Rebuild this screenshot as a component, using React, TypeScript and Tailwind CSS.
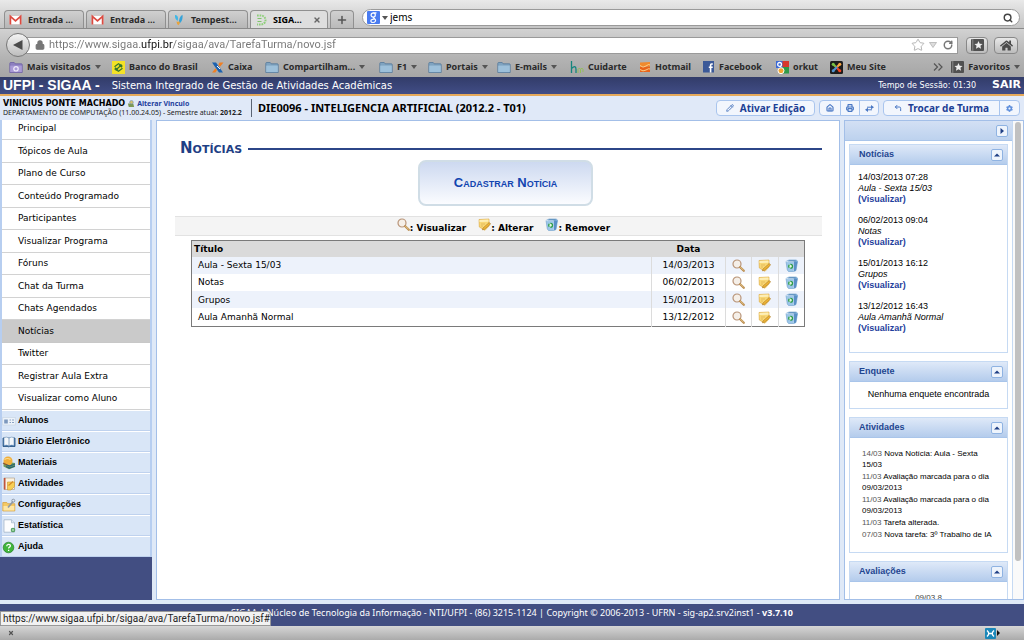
import React from "react";
import type { ReactNode } from "react";
import { Home, Lock, Plus, Printer, RotateCw, Search, Star, X, CornerUpLeft, Pencil } from "lucide-react";
import { FaCog, FaHome } from "react-icons/fa";

const UI = "font-['Noto_Sans','Open_Sans',sans-serif]";
const VERDANA = "font-['DejaVu_Sans','Verdana',sans-serif]";
const ARIAL = "font-['Liberation_Sans','Arial',sans-serif]";
const ROBOTO = "font-['Roboto',sans-serif]";

/* ---------- icons ---------- */

const Gmail = () => (
  <svg viewBox="0 0 13 12" className="h-3 w-[13px] shrink-0">
    <rect x=".5" y="1.5" width="12" height="9" rx="1" fill="#fff" stroke="#c9b5b3" strokeWidth=".6" />
    <path d="M1.4 10.6V2.4l5.1 4.4 5.1-4.4v8.2" fill="none" stroke="#dc4a40" strokeWidth="1.7" />
  </svg>
);

const Tempest = () => (
  <svg viewBox="0 0 12 12" className="h-3 w-3 shrink-0">
    <path d="M2 1c2 0 3 1.500 3 3.500L4.800 7C3 6 1.500 4 2 1z" fill="#3fb7e6" />
    <path d="M9.500.8C7 2 5.800 5.500 5.800 9.500 8.500 9 10 5 9.500.8z" fill="#35a3d9" />
    <path d="M3.500 7.500q2 .5 3.500 0-.2 3-1.700 3.800Q3.700 10 3.500 7.500z" fill="#e9a23b" />
  </svg>
);

const SigaaTab = () => (
  <svg viewBox="0 0 12 12" className="h-3 w-3 shrink-0">
    <path d="M2 1.500h4a4.500 4.500 0 0 1 0 9H2" fill="none" stroke="#8fcf7b" strokeWidth="2" strokeDasharray="1.700 .9" />
    <path d="M2.500 4.500h4M2.500 7.500h4" stroke="#7fc46b" strokeWidth="1.200" />
  </svg>
);

const GoogleG = () => (
  <svg viewBox="0 0 13 13" className="h-[13px] w-[13px] shrink-0">
    <rect width="13" height="13" rx="1" fill="#4a7cf0" />
    <path d="M9.500 1.800H6.600c-3.300 0-3.300 4.300-.4 4.300 2.800 0 2.800-4 .2-4.200M7 6.200c-1 1 .2 1.200.9 1.800 1.600 1.300.3 3.500-2 3.500s-3-2.600-.6-3.200c.8-.2 1.700-.2 2.200-.1" fill="none" stroke="#fff" strokeWidth="1.200" />
  </svg>
);

const Folder = ({ smart = false }: { smart?: boolean }) => (
  <svg viewBox="0 0 14 13" className="h-[13px] w-3.5 shrink-0">
    <path d="M.8 11.500V2.300q0-.8.8-.8h3.600l1 1.300h6.200q.8 0 .8.8v7.900z" fill={smart ? "#8d7fc0" : "#7fa3c0"} stroke={smart ? "#6c5fa3" : "#56799a"} strokeWidth=".8" />
    <path d="M1.200 4.600h11.600v6.500H1.200z" fill={smart ? "#a99ad6" : "#9dc0da"} />
    {smart && <circle cx="7" cy="7.800" r="2.200" fill="none" stroke="#f0ecfb" strokeWidth="1.200" />}
  </svg>
);

const BancoBrasil = () => (
  <svg viewBox="0 0 13 13" className="h-[13px] w-[13px] shrink-0">
    <rect width="13" height="13" fill="#f4e227" />
    <path d="M2.500 5.800l4-3 4 2.500M10.500 7.200l-4 3-4-2.500M3.500 9.200l6.200-5.400M7 4.600l3 1.700M6 8.400L3 6.700" fill="none" stroke="#33762f" strokeWidth="1.200" />
  </svg>
);

const Caixa = () => (
  <svg viewBox="0 0 13 13" className="h-[13px] w-[13px] shrink-0">
    <path d="M1 1.500h4L12 11.500H8z" fill="#1c62b0" />
    <path d="M8.500 1.500h4L9 5.700 7.300 4zM1 11.500l3.500-4.300L6 9l-1.600 2.500z" fill="#f07f22" />
    <path d="M6 5l3 3" stroke="#fff" strokeWidth="1" />
  </svg>
);

const Cuidarte = () => (
  <svg viewBox="0 0 14 14" className="h-3.5 w-3.5 shrink-0">
    <path d="M1.500 1v12M1.500 8.500q4.500-4 4.500 1V13" fill="none" stroke="#15857e" strokeWidth="1.300" />
    <path d="M8 13V9.500q1.500-3 2.500 0V13M10.500 9.500q1.500-3 2.500 0V12" fill="none" stroke="#93bf5a" strokeWidth="1" />
  </svg>
);

const Hotmail = () => (
  <svg viewBox="0 0 12 12" className="h-3 w-3 shrink-0">
    <path d="M1 1.500l10-.5v4.500H1z" fill="#f08a2d" />
    <path d="M1 5.500h10V11H1z" fill="#e8641b" />
    <path d="M1 4.500q3 3 6 .5t4-1M1 8.500q3 2.500 6 .5t4-1" fill="none" stroke="#ffd890" strokeWidth=".9" />
  </svg>
);

const FacebookLogo = () => (
  <svg viewBox="0 0 12 12" className="h-3 w-3 shrink-0">
    <rect width="11" height="11.500" fill="#3b5998" />
    <path d="M9.800 3H8.600q-1 0-1 1.200v7.300M5.800 6.300h3.900" fill="none" stroke="#fff" strokeWidth="1.600" />
  </svg>
);

const Orkut = () => (
  <svg viewBox="0 0 13 13" className="h-[13px] w-[13px] shrink-0">
    <rect x="5" width="8" height="6" fill="#d8372d" />
    <rect x="6" y="6" width="7" height="6.500" fill="#2f9a48" />
    <rect width="6.500" height="7" fill="#3b69d6" />
    <circle cx="3.600" cy="3.400" r="1.900" fill="none" stroke="#fff" strokeWidth="1.300" />
    <circle cx="5" cy="9.700" r="3" fill="#f2a531" stroke="#fff" strokeWidth="1" />
  </svg>
);

const Joomla = () => (
  <svg viewBox="0 0 13 13" className="h-[13px] w-[13px] shrink-0">
    <rect width="13" height="13" rx="1.500" fill="#1d1d1d" />
    <g fill="none" strokeWidth="2.200" strokeLinecap="round">
      <path d="M3.500 3.500l3 3" stroke="#7ac143" />
      <path d="M9.500 3.500l-3 3" stroke="#f9a541" />
      <path d="M9.500 9.500l-3-3" stroke="#f44321" />
      <path d="M3.500 9.500l3-3" stroke="#5091cd" />
    </g>
    <circle cx="3.200" cy="3.200" r="1.500" fill="#7ac143" />
    <circle cx="9.800" cy="3.200" r="1.500" fill="#f9a541" />
    <circle cx="9.800" cy="9.800" r="1.500" fill="#f44321" />
    <circle cx="3.200" cy="9.800" r="1.500" fill="#5091cd" />
  </svg>
);

const StarBook = () => (
  <svg viewBox="0 0 13 12" className="h-3 w-[13px] shrink-0">
    <rect width="13" height="12" rx="1" fill="#515151" />
    <path d="M1.800 0v12" stroke="#999" strokeWidth=".8" />
    <path d="M7.500 2l1.200 2.700 2.900.2-2.200 1.900.7 2.900-2.600-1.500-2.600 1.500.7-2.900L3.400 4.900l2.900-.2z" fill="#eee" />
  </svg>
);

const Caret = () => (
  <svg viewBox="0 0 6 4" className="h-1 w-1.5 shrink-0">
    <path d="M0 0h6L3 4z" fill="#555" />
  </svg>
);

const Magnifier = () => (
  <svg viewBox="0 0 13 13" className="inline-block h-[13px] w-[13px]">
    <circle cx="5" cy="5" r="4" fill="#f5efe8" stroke="#b89478" strokeWidth="1.200" />
    <path d="M8.200 8.200l3.600 3.600" stroke="#b98a4c" strokeWidth="2.200" strokeLinecap="round" />
    <path d="M8.600 8.300l2.900 2.900" stroke="#f0d69a" strokeWidth=".8" strokeLinecap="round" />
  </svg>
);

const Note = () => (
  <svg viewBox="0 0 13 13" className="inline-block h-[13px] w-[13px]">
    <path d="M1 1.500l10-.5v7L7 12.300 1.300 9z" fill="#f8d775" stroke="#dba63c" strokeWidth=".6" />
    <path d="M1.500 2l9-.5v2.200l-9 .4z" fill="#fdeeb6" />
    <path d="M5 10l6.300-5.500 1.300 1.500-6.400 5.500-1.900.3z" fill="#f2b632" stroke="#a8782c" strokeWidth=".6" />
    <path d="M3 6h4M3 8h2" stroke="#d9a94a" strokeWidth=".6" />
  </svg>
);

const Trash = () => (
  <svg viewBox="0 0 13 13" className="inline-block h-[13px] w-[13px]">
    <path d="M1 2.500l3-1.500h7.500l1 1.500-1.500 9-2 1H3.500L2.300 11z" fill="#9cc6e8" stroke="#6d9dcb" strokeWidth=".6" />
    <path d="M1.200 2.600h7.500L9 12.300" fill="none" stroke="#e2f0fb" strokeWidth=".8" />
    <path d="M2.500 2.300l2-.8h6l.8.8z" fill="#3f74a8" />
    <path d="M8.700 2.600l3.800-.2-1.600 9-2 .9z" fill="#5a90c6" />
    <circle cx="5.600" cy="7.200" r="1.900" fill="#e6f6e2" stroke="#2d9c45" strokeWidth="1.300" strokeDasharray="3 .9" />
  </svg>
);

const GroupIcon = ({ kind }: { kind: string }) => (
  <svg viewBox="0 0 14 14" className="h-3.5 w-3.5 shrink-0">
    {kind === "card" && (
      <>
        <rect x=".8" y="3.500" width="12.400" height="7.500" fill="#edf3fa" stroke="#c5d2e2" strokeWidth=".6" />
        <rect x="2.200" y="5.500" width="3.600" height="4" fill="#7d98bd" />
        <path d="M7.500 6h1.500M10 6h2M7.500 8.500h1.500M10 8.500h2" stroke="#8ba3c4" />
      </>
    )}
    {kind === "book" && (
      <>
        <path d="M1 3v8.500h5.300l.7.700.7-.7H13V3z" fill="#3d70a8" stroke="#24507f" strokeWidth=".8" />
        <path d="M2 2.500q3-1 5 .5 2-1.500 5-.5v8q-3-1-5 .5-2-1.500-5-.5z" fill="#f3f7fb" stroke="#6c8fb5" strokeWidth=".6" />
        <path d="M7 3v8" stroke="#6c8fb5" strokeWidth=".8" />
      </>
    )}
    {kind === "books" && (
      <>
        <path d="M1.500 8l5-2 6.500 1v4l-6 2.300-5.500-2.800z" fill="#6f9b5a" />
        <circle cx="6" cy="5" r="4.500" fill="#f0ae3a" />
        <path d="M2.500 3.500q3-2 6 0" fill="none" stroke="#fbd98c" strokeWidth="1.200" />
        <path d="M4 8.500l3.500 1.500L13 8M4 10.500l3.500 1.500 5.500-2" fill="none" stroke="#24627a" strokeWidth="1.200" />
        <path d="M1 7l4 2" stroke="#8a542c" strokeWidth="1.300" />
      </>
    )}
    {kind === "notes" && (
      <>
        <path d="M2 1h10.500v11.500H2z" fill="#fbf2df" stroke="#b5a38c" strokeWidth=".7" />
        <path d="M2.700 1v11.500" stroke="#c1543d" strokeWidth="1.600" />
        <path d="M5.500 5h7v4.500L9 13H5.500z" fill="#f7cf55" stroke="#c99430" strokeWidth=".6" />
        <path d="M6.500 8.500l4.500-4" stroke="#d7892a" strokeWidth="1.200" />
      </>
    )}
    {kind === "config" && (
      <>
        <path d="M.8 4.500h4l1 1.200h7v7.300H.8z" fill="#f5c963" stroke="#d29c3a" strokeWidth=".7" />
        <path d="M1.500 8h10.800v4.500H1.500z" fill="#fde6a6" />
        <path d="M6 9.500l5-6" stroke="#8f9aa8" strokeWidth="1.700" />
        <circle cx="11.300" cy="2.700" r="1.500" fill="none" stroke="#8f9aa8" />
      </>
    )}
    {kind === "page" && (
      <>
        <path d="M2 .8h7.500l3 3v9.400H2z" fill="#fcfdfe" stroke="#9badc2" strokeWidth=".7" />
        <path d="M9.500.8v3h3" fill="#dce6f0" stroke="#9badc2" strokeWidth=".6" />
        <circle cx="11" cy="11" r="2.300" fill="#4d9d5c" />
        <path d="M11 9.700v2.600M9.700 11h2.600" stroke="#d6f0d4" strokeWidth=".7" />
      </>
    )}
    {kind === "help" && (
      <>
        <circle cx="6.500" cy="7.500" r="5.300" fill="#3fb53b" stroke="#237a26" strokeWidth=".7" />
        <path d="M4.700 6.200q.1-1.900 1.900-1.900t1.800 1.500q0 1-1.200 1.500-.6.400-.6 1.200M6.600 9.800v1.200" fill="none" stroke="#fff" strokeWidth="1.300" />
      </>
    )}
  </svg>
);

/* ---------- browser chrome ---------- */

const tabs = [
  { icon: <Gmail />, label: "Entrada ..." },
  { icon: <Gmail />, label: "Entrada ..." },
  { icon: <Tempest />, label: "Tempest..." },
];

function TabBar() {
  return (
    <div className="flex h-[29px] items-end gap-0.5 border-b border-[#8a8a8a] bg-linear-to-b from-[#e9e9e9] to-[#c4c4c4] pl-1">
      {tabs.map((t, i) => (
        <button key={i} className="flex h-[18px] w-20 items-center gap-1.5 rounded-t border border-b-0 border-[#909090] bg-linear-to-b from-[#d0d0d0] to-[#b6b6b6] pl-1 text-[9px] font-bold whitespace-nowrap text-[#2c2c2c]">
          {t.icon}
          {t.label}
        </button>
      ))}
      <div className="flex h-[18px] w-[78px] items-center gap-1.5 rounded-t border border-b-0 border-[#909090] bg-[#dedede] pl-1 text-[9px]">
        <button className="flex grow items-center gap-1.5 font-bold whitespace-nowrap">
          <SigaaTab />
          SIGA...
        </button>
        <button aria-label="Fechar aba" className="pr-1.5">
          <X className="size-2 text-[#666]" strokeWidth={4} />
        </button>
      </div>
      <button aria-label="Nova aba" className="flex h-[18px] w-6 items-center justify-center rounded-t border border-b-0 border-[#909090] bg-linear-to-b from-[#d0d0d0] to-[#bababa]">
        <Plus className="size-3 text-[#555]" strokeWidth={3} />
      </button>
      <div className="mr-1 mb-0.5 ml-1.5 flex h-[17px] grow items-center gap-0.5 rounded-full border border-[#9a9a9a] bg-white pr-1.5 pl-1">
        <GoogleG />
        <Caret />
        <input aria-label="Pesquisar" defaultValue="jems" className="min-w-0 grow bg-transparent text-[10px] text-black outline-none" />
        <Search className="size-2.5 text-[#444]" strokeWidth={3.500} />
      </div>
    </div>
  );
}

function AddressBar() {
  return (
    <div className="flex h-7 items-center bg-linear-to-b from-[#d2d2d2] to-[#b4b4b4] px-1.5 pt-1">
      <button aria-label="Voltar" className="z-10 -my-1 flex size-6 shrink-0 items-center justify-center rounded-full border border-[#777] bg-linear-to-b from-[#f4f4f4] to-[#bdbdbd]">
        <svg viewBox="0 0 10 10" className="size-2.5">
          <path d="M9.500 0v10L0 5z" fill="#4a4a4a" />
        </svg>
      </button>
      <div className="-ml-1 flex h-[17px] grow items-center border border-[#9a9a9a] bg-white pr-1 pl-2">
        <Lock className="size-2.5 shrink-0 text-[#777]" fill="#777" strokeWidth={3} />
        <input
          aria-label="Endereço"
          defaultValue="https://www.sigaa.ufpi.br/sigaa/ava/TarefaTurma/novo.jsf"
          className={"ml-1 min-w-0 grow bg-[linear-gradient(90deg,#757575_91px,#111_91px,#111_124px,#757575_124px)] bg-clip-text text-[11px] text-transparent outline-none " + ROBOTO}
        />
        <Star className="size-3.5 text-[#aaa]" strokeWidth={1.500} />
        <svg viewBox="0 0 8 6" className="ml-1 h-1.5 w-2">
          <path d="M.5.5h7L4 5.500z" fill="#ddd" stroke="#aaa" strokeWidth=".7" />
        </svg>
        <RotateCw className="ml-1.5 size-2.5 text-[#777]" strokeWidth={3.500} />
      </div>
      <button aria-label="Favoritos" className="ml-2 flex h-[17px] w-[22px] items-center justify-center rounded-sm border border-[#888] bg-linear-to-b from-[#e8e8e8] to-[#bcbcbc]">
        <StarBook />
      </button>
      <button aria-label="Página inicial" className="ml-1.5 flex h-[17px] w-6 items-center justify-center rounded-sm border border-[#888] bg-linear-to-b from-[#e8e8e8] to-[#bcbcbc]">
        <FaHome className="size-[13px] text-[#4a4a4a]" />
      </button>
    </div>
  );
}

const bookmarks: { icon: ReactNode; label: string; menu?: boolean; width: string }[] = [
  { icon: <Folder smart />, label: "Mais visitados", menu: true, width: "w-[103px]" },
  { icon: <BancoBrasil />, label: "Banco do Brasil", width: "w-[99px]" },
  { icon: <Caixa />, label: "Caixa", width: "w-[54px]" },
  { icon: <Folder />, label: "Compartilham...", menu: true, width: "w-[114px]" },
  { icon: <Folder />, label: "F1", menu: true, width: "w-[49px]" },
  { icon: <Folder />, label: "Portais", menu: true, width: "w-[69px]" },
  { icon: <Folder />, label: "E-mails", menu: true, width: "w-[73px]" },
  { icon: <Cuidarte />, label: "Cuidarte", width: "w-[69px]" },
  { icon: <Hotmail />, label: "Hotmail", width: "w-[64px]" },
  { icon: <FacebookLogo />, label: "Facebook", width: "w-[73px]" },
  { icon: <Orkut />, label: "orkut", width: "w-[54px]" },
  { icon: <Joomla />, label: "Meu Site", width: "w-[60px]" },
];

function BookmarkBar() {
  return (
    <nav aria-label="Barra de favoritos" className="flex h-5 items-center bg-linear-to-b from-[#b4b4b4] to-[#a6a6a6] pr-1 pl-[9px] text-[9px] font-bold whitespace-nowrap text-[#2a2a2a]">
      {bookmarks.map((b) => (
        <a key={b.label} href="#" className={"flex shrink-0 items-center gap-1 " + b.width}>
          {b.icon}
          {b.label}
          {b.menu && <Caret />}
        </a>
      ))}
      <button aria-label="Mais favoritos" className="ml-auto">
        <svg viewBox="0 0 10 8" className="mr-2 h-2 w-2.5">
          <path d="M1 .5L4.500 4 1 7.500M5.500.5L9 4 5.500 7.500" fill="none" stroke="#555" strokeWidth="1.200" />
        </svg>
      </button>
      <a href="#" className="flex items-center gap-1">
        <StarBook />
        Favoritos
        <Caret />
      </a>
    </nav>
  );
}

/* ---------- SIGAA header ---------- */

const toolBtn = "flex items-center justify-center border-[#a9c5ee]";

function Header() {
  return (
    <header className={VERDANA}>
      <div className="flex h-[19px] items-center border-b-2 border-[#e5a95a] bg-linear-to-b from-[#323c69] to-[#414d86] px-[3px] whitespace-nowrap text-white">
        <span className={"text-[14px] font-bold " + ARIAL}>UFPI - SIGAA -</span>
        <span className="ml-3 text-[10px]">Sistema Integrado de Gestão de Atividades Acadêmicas</span>
        <span className="ml-auto text-[8px]">Tempo de Sessão: 01:30</span>
        <a href="#" className="ml-4 text-[11px] font-bold">SAIR</a>
      </div>
      <div className={"flex h-6 items-center bg-[#e0e9f8] pr-1 whitespace-nowrap " + UI}>
        <div className="flex h-[18px] w-[252px] shrink-0 flex-col justify-center border-r border-[#5a6474] pl-[3px]">
          <div className="flex items-center gap-0.5 text-[8px] leading-[9px] font-bold">
            <span className={VERDANA}>VINICIUS PONTE MACHADO</span>
            <a href="#" className="flex items-center text-[7px] text-[#1f3f9d]">
              <svg viewBox="0 0 9 9" className="mr-0.5 size-2">
                <path d="M1 4h6l1 4H2z" fill="#7d9a55" />
                <circle cx="5" cy="2.500" r="2" fill="#d6c36c" stroke="#6f8fb5" strokeWidth=".7" />
              </svg>
              Alterar Vinculo
            </a>
          </div>
          <p className="text-[7px] leading-[9px] text-[#222]">
            DEPARTAMENTO DE COMPUTAÇÃO (11.00.24.05) - Semestre atual: <b>2012.2</b>
          </p>
        </div>
        <h1 className="ml-1.5 text-[11px] font-bold">DIE0096 - INTELIGENCIA ARTIFICIAL (2012.2 - T01)</h1>
        <div className="ml-auto flex h-4 gap-1 text-[10px] font-bold text-[#1c3f95]">
          <button className={toolBtn + " w-[99px] gap-1.5 rounded border bg-[#f2f6fd]"}>
            <Pencil className="size-2 text-[#5b83c4]" strokeWidth={3} />
            Ativar Edição
          </button>
          <div className="flex w-[60px] rounded border border-[#a9c5ee] bg-[#f2f6fd]">
            <button aria-label="Início" className={toolBtn + " w-5"}><Home className="size-2 text-[#4a78c4]" strokeWidth={3.500} /></button>
            <button aria-label="Imprimir" className={toolBtn + " w-5 border-x"}><Printer className="size-2 text-[#4a78c4]" strokeWidth={3.500} /></button>
            <button aria-label="Trocar" className={toolBtn + " grow"}>
              <svg viewBox="0 0 9 7" className="h-[7px] w-[9px]">
                <path d="M2 2.200h5M2 4.800h5" stroke="#4a78c4" strokeWidth="1" />
                <path d="M6 0l3 2.200L6 4.200zM3 2.800L0 4.800 3 7z" fill="#4a78c4" />
              </svg>
            </button>
          </div>
          <div className="flex w-[137px] rounded border border-[#a9c5ee] bg-[#f2f6fd]">
            <button className={toolBtn + " grow gap-1.5"}>
              <CornerUpLeft className="size-2 text-[#4a78c4]" strokeWidth={3} />
              Trocar de Turma
            </button>
            <button aria-label="Configurações" className={toolBtn + " w-5 border-l"}><FaCog className="size-[7px] text-[#5f8fdc]" /></button>
          </div>
        </div>
      </div>
    </header>
  );
}

/* ---------- left menu ---------- */

const menu = ["Principal", "Tópicos de Aula", "Plano de Curso", "Conteúdo Programado", "Participantes", "Visualizar Programa", "Fóruns", "Chat da Turma", "Chats Agendados", "Notícias", "Twitter", "Registrar Aula Extra", "Visualizar como Aluno"];

const groups = [
  { label: "Alunos", kind: "card" },
  { label: "Diário Eletrônico", kind: "book" },
  { label: "Materiais", kind: "books" },
  { label: "Atividades", kind: "notes" },
  { label: "Configurações", kind: "config" },
  { label: "Estatística", kind: "page" },
  { label: "Ajuda", kind: "help" },
];

function Sidebar() {
  return (
    <nav aria-label="Menu da turma" className="flex w-[152px] shrink-0 flex-col overflow-hidden bg-[#424e82]">
      <div className="overflow-hidden border-x-2 border-[#b7cef0] bg-[#d9e6f7]">
        <ul className={"-mt-0.5 grid h-[292px] auto-rows-fr bg-white " + VERDANA}>
          {menu.map((m) => (
            <li key={m} className={m === "Notícias" ? "border-b border-[#c8c8c8] bg-[#cacaca]" : "border-b border-[#d2d2d2]"}>
              <a href="#" className="flex h-full items-center pt-px pl-4 text-[9px] text-black">{m}</a>
            </li>
          ))}
        </ul>
        {groups.map((g) => (
          <button key={g.label} className={"flex h-[21px] w-full items-center gap-0.5 border-t border-b border-t-white border-b-[#bfd2ee] bg-[#d9e6f7] text-left text-[9px] font-bold text-black " + ARIAL}>
            <GroupIcon kind={g.kind} />
            {g.label}
          </button>
        ))}
      </div>
    </nav>
  );
}

/* ---------- main content ---------- */

const rows = [
  ["Aula - Sexta 15/03", "14/03/2013"],
  ["Notas", "06/02/2013"],
  ["Grupos", "15/01/2013"],
  ["Aula Amanhã Normal", "13/12/2012"],
];

const cell = "border-l border-[#dcdcdc] p-0 text-center";
const action = "flex w-full items-center justify-center";

function Content() {
  return (
    <main className={"grow overflow-hidden border border-[#a3bfe8] bg-white pr-[17px] pl-[18px] " + VERDANA}>
      <div className="mt-[18px] flex h-[18px] items-center gap-1.5 pl-[5px]">
        <h2 className="text-[15px] leading-[18px] font-bold text-[#1f3f85] [font-variant:small-caps]">Notícias</h2>
        <div className="mt-0.5 h-0.5 grow bg-[#2c4688]" />
      </div>
      <div className="mt-[3px] flex justify-center pl-3.5">
        <button className={"h-[46px] w-[175px] rounded-lg border-2 border-[#d0dde6] bg-linear-to-b from-[#cdd9f0] to-[#fbfcff] text-[13px] font-bold text-[#1245b0] [font-variant:small-caps] " + ARIAL}>
          Cadastrar Notícia
        </button>
      </div>
      <div className="mt-2.5 flex h-5 items-start justify-center gap-3 border-y border-[#e2e2e2] bg-[#f4f4f4] pt-px pl-2.5 text-[9px] font-bold">
        <span className="flex"><Magnifier /><span className="pt-1">: Visualizar</span></span>
        <span className="flex"><Note /><span className="pt-1">: Alterar</span></span>
        <span className="flex"><Trash /><span className="pt-1">: Remover</span></span>
      </div>
      <div className="mt-1 pr-[17px] pl-4">
        <table className="h-[87px] w-full table-fixed border-collapse border border-[#7a7a7a] text-[9px] leading-3 text-black">
          <colgroup>
            <col />
            <col className="w-[74px]" />
            <col className="w-[26px]" />
            <col className="w-[27px]" />
            <col className="w-[26px]" />
          </colgroup>
          <thead>
            <tr className="h-4 bg-[#dadada]">
              <th className="p-0 pl-0.5 text-left">Título</th>
              <th className="p-0">Data</th>
              <th colSpan={3} className="p-0" aria-label="Ações" />
            </tr>
          </thead>
          <tbody>
            {rows.map(([title, date], i) => (
              <tr key={title} className={i % 2 === 0 ? "bg-[#edf2fb]" : "bg-white"}>
                <td className="p-0 pl-1.5">{title}</td>
                <td className={cell}>{date}</td>
                <td className={cell}><button aria-label="Visualizar" className={action}><Magnifier /></button></td>
                <td className={cell}><button aria-label="Alterar" className={action}><Note /></button></td>
                <td className={cell}><button aria-label="Remover" className={action}><Trash /></button></td>
              </tr>
            ))}
          </tbody>
        </table>
      </div>
    </main>
  );
}

/* ---------- right column ---------- */

const PanelToggle = ({ label, right = false }: { label: string; right?: boolean }) => (
  <button aria-label={label} className="flex size-3 items-center justify-center rounded-[2px] border border-[#8fb3e2] bg-[#eef4fc]">
    <svg viewBox="0 0 6 6" className="size-1.5">
      <path d={right ? "M1.500 0v6l3.500-3z" : "M0 4.500h6L3 1.500z"} fill="#1f3f85" />
    </svg>
  </button>
);

function Panel({ title, body, children }: { title: string; body: string; children: ReactNode }) {
  return (
    <section className="shrink-0 border border-[#c6daf3]">
      <div className="flex h-5 items-center justify-between border-b border-[#a9c5ea] bg-linear-to-b from-[#dfe9f8] to-[#b4ccec] pr-1 pl-[9px]">
        <h3 className="text-[9px] font-bold text-[#1f4590]">{title}</h3>
        <PanelToggle label={"Recolher " + title} />
      </div>
      <div className={body}>{children}</div>
    </section>
  );
}

const news = [
  ["14/03/2013 07:28", "Aula - Sexta 15/03"],
  ["06/02/2013 09:04", "Notas"],
  ["15/01/2013 16:12", "Grupos"],
  ["13/12/2012 16:43", "Aula Amanhã Normal"],
];

const activities = [
  ["14/03", "Nova Notícia: Aula - Sexta 15/03"],
  ["11/03", "Avaliação marcada para o dia 09/03/2013"],
  ["11/03", "Avaliação marcada para o dia 09/03/2013"],
  ["11/03", "Tarefa alterada."],
  ["07/03", "Nova tarefa: 3º Trabalho de IA"],
];

function RightColumn() {
  return (
    <aside className={"flex w-[180px] shrink-0 overflow-hidden border border-[#a3bfe8] bg-white " + ARIAL}>
      <div className="flex min-w-0 grow flex-col border-r border-[#c6daf3]">
        <div className="flex h-5 shrink-0 items-center justify-end border-b border-[#a9c5ea] bg-linear-to-b from-[#d3e0f4] to-[#bdd2ee] pr-1">
          <PanelToggle label="Recolher painel" right />
        </div>
        <div className="flex grow basis-0 flex-col gap-2 overflow-hidden px-1 pt-[3px]">
          <Panel title="Notícias" body="flex h-[187px] flex-col gap-2.5 pt-[7px] pl-2 text-[9px] leading-[11px]">
            {news.map(([when, what]) => (
              <div key={when}>
                <p>{when}</p>
                <p className="italic">{what}</p>
                <a href="#" className="block font-bold text-[#1f3f9d]">(Visualizar)</a>
              </div>
            ))}
          </Panel>
          <Panel title="Enquete" body="flex h-[26px] items-center justify-center text-[9px]">
            <p>Nenhuma enquete encontrada</p>
          </Panel>
          <Panel title="Atividades" body="flex h-[114px] flex-col gap-px pt-2.5 pr-3 pl-3 text-[8px] leading-[11px]">
            {activities.map(([when, what], i) => (
              <p key={i}>
                <span className="text-[#555]">{when}</span> {what}
              </p>
            ))}
          </Panel>
          <Panel title="Avaliações" body="pt-2.5 text-center text-[8px] leading-[11px] text-[#444]">
            <p>09/03 8</p>
          </Panel>
        </div>
      </div>
      <div className="w-2.5 shrink-0 bg-[#fafafa] px-0.5 pt-px">
        <div className="h-[92%] w-1.5 rounded-full bg-[#c1c1c1]" />
      </div>
    </aside>
  );
}

/* ---------- page ---------- */

export default function App() {
  return (
    <div className={"relative flex h-screen flex-col overflow-hidden bg-[#dfe9f7] " + UI}>
      <TabBar />
      <AddressBar />
      <BookmarkBar />
      <Header />
      <div className="flex min-h-0 grow gap-1 pb-1">
        <Sidebar />
        <Content />
        <RightColumn />
      </div>
      <footer className="h-[22px] shrink-0 bg-[#424e82] pt-[3px] text-center text-[9px] leading-3 whitespace-nowrap text-white">
        SIGAA | Núcleo de Tecnologia da Informação - NTI/UFPI - (86) 3215-1124 | Copyright © 2006-2013 - UFRN - sig-ap2.srv2inst1 - <b>v3.7.10</b>
      </footer>
      <div className="flex h-3.5 shrink-0 items-center bg-linear-to-b from-[#d6d6d6] to-[#aaa] pr-6 pl-2">
        <button aria-label="Fechar barra">
          <X className="size-1.5 text-[#555]" strokeWidth={5} />
        </button>
        <button aria-label="Complementos" className="ml-auto flex items-center gap-px">
          <svg viewBox="0 0 11 11" className="size-[11px]">
            <rect width="11" height="11" rx="1" fill="#1b87b8" />
            <path d="M2 2.500q3.500 3 0 6M9 2.500q-3.500 3 0 6M3.500 5.500h4" fill="none" stroke="#fff" strokeWidth="1.400" />
          </svg>
          <svg viewBox="0 0 3 6" className="h-1.5 w-[3px]">
            <path d="M0 0v6l3-3z" fill="#111" />
          </svg>
        </button>
      </div>
      <div className={"absolute bottom-3.5 left-0 h-[15px] rounded-tr-sm border border-[#999] bg-[#f2f2f2] pl-0.5 text-[10px] leading-[13px] text-[#222] " + ROBOTO}>
        https://www.sigaa.ufpi.br/sigaa/ava/TarefaTurma/novo.jsf#
      </div>
    </div>
  );
}
